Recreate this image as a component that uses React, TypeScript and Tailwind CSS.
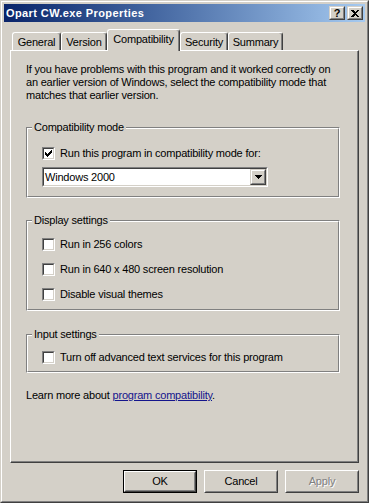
import type { ReactNode } from "react";

const font = "font-['Liberation_Sans',Arial,sans-serif]";

const CheckMark = () => (
  <svg width="7" height="7" viewBox="0 0 7 7" shapeRendering="crispEdges">
    <rect x="0" y="2" width="1" height="3" fill="#000" />
    <rect x="1" y="3" width="1" height="3" fill="#000" />
    <rect x="2" y="4" width="1" height="3" fill="#000" />
    <rect x="3" y="3" width="1" height="3" fill="#000" />
    <rect x="4" y="2" width="1" height="3" fill="#000" />
    <rect x="5" y="1" width="1" height="3" fill="#000" />
    <rect x="6" y="0" width="1" height="3" fill="#000" />
  </svg>
);

const CheckBox = ({ checked, label }: { checked?: boolean; label: string }) => (
  <div className="flex items-center h-[13px]">
    <span className="w-[13px] h-[13px] border border-t-[#808080] border-l-[#808080] border-r-white border-b-white">
      <span className="flex w-[11px] h-[11px] items-center justify-center bg-white border border-t-[#404040] border-l-[#404040] border-r-[#d4d0c8] border-b-[#d4d0c8]">
        {checked && <CheckMark />}
      </span>
    </span>
    <span className="ml-[5px] leading-[13px] whitespace-nowrap">{label}</span>
  </div>
);

const GroupBox = ({
  title,
  className,
  children,
}: {
  title: string;
  className: string;
  children: ReactNode;
}) => (
  <div className="relative w-[314px]">
    <div className="border border-t-[#808080] border-l-[#808080] border-r-white border-b-white">
      <div className={`border border-t-white border-l-white border-r-[#808080] border-b-[#808080] pl-[14px] ${className}`}>
        {children}
      </div>
    </div>
    <span className="absolute -top-[6px] left-[6px] px-[2px] bg-[#d4d0c8] leading-[13px]">
      {title}
    </span>
  </div>
);

const Button = ({
  label,
  isDefault,
  disabled,
}: {
  label: string;
  isDefault?: boolean;
  disabled?: boolean;
}) => (
  <button
    className={`w-[74px] h-[23px] bg-[#d4d0c8] ${isDefault ? "border border-black" : ""}`}
  >
    <span className="flex h-full w-full border border-t-white border-l-white border-r-[#404040] border-b-[#404040]">
      <span
        className={`flex flex-1 items-center justify-center border border-transparent border-r-[#808080] border-b-[#808080] leading-[13px] ${
          disabled ? "text-[#808080] [text-shadow:1px_1px_0_#fff]" : "text-black"
        }`}
      >
        {label}
      </span>
    </span>
  </button>
);

const CaptionButton = ({ children }: { children: ReactNode }) => (
  <span className="w-[16px] h-[14px] bg-[#d4d0c8] border border-t-[#d4d0c8] border-l-[#d4d0c8] border-r-[#404040] border-b-[#404040]">
    <span className="flex w-full h-full items-center justify-center border border-t-white border-l-white border-r-[#808080] border-b-[#808080]">
      {children}
    </span>
  </span>
);

const tabs = [
  { label: "General", width: "w-[49px]" },
  { label: "Version", width: "w-[46px]" },
  { label: "Compatibility", width: "w-[73px]", active: true },
  { label: "Security", width: "w-[48px]" },
  { label: "Summary", width: "w-[55px]" },
];

export default function App() {
  return (
    <div className={`${font} text-[11px] tracking-[-0.2px] text-black w-[369px] h-[503px] bg-[#d4d0c8] border border-t-[#d4d0c8] border-l-[#d4d0c8] border-r-[#404040] border-b-[#404040]`}>
      <div className="h-full border border-t-white border-l-white border-r-[#808080] border-b-[#808080] p-[2px] flex flex-col">
        {/* title bar */}
        <div className="h-[18px] flex items-center bg-gradient-to-r from-[#0a246a] to-[#a6caf0] pl-[2px] pr-[2px]">
          <span className="text-white font-bold tracking-[0.4px] leading-[13px] flex-1">Opart CW.exe Properties</span>
          <div className="flex gap-[2px]">
            <CaptionButton>
              <span className="font-bold text-[11px] leading-[10px] tracking-normal">?</span>
            </CaptionButton>
            <CaptionButton>
              <svg width="8" height="7" viewBox="0 0 8 7" shapeRendering="crispEdges">
                <path d="M0 0h2l2 2 2-2h2L5 3.5 8 7H6L4 5 2 7H0l3-3.5z" fill="#000" />
              </svg>
            </CaptionButton>
          </div>
        </div>

        {/* tabs */}
        <div className="h-[28px] flex items-end ml-[8px]">
          {tabs.map((t) =>
            t.active ? (
              <div
                key={t.label}
                className={`${t.width} h-[22px] -mb-[1px] relative z-10 bg-[#d4d0c8] rounded-t-[3px] border border-b-0 border-t-white border-l-white border-r-[#404040] shadow-[inset_-1px_0_0_#808080] flex justify-center pt-[3px] leading-[13px]`}
              >
                {t.label}
              </div>
            ) : (
              <div
                key={t.label}
                className={`${t.width} h-[18px] rounded-t-[3px] border border-b-0 border-t-white border-l-white border-r-[#404040] shadow-[inset_-1px_0_0_#808080] flex justify-center pt-[3px] leading-[13px]`}
              >
                {t.label}
              </div>
            )
          )}
        </div>

        {/* tab panel */}
        <div className="ml-[6px] w-[349px] h-[413px] border border-t-white border-l-white border-r-[#404040] border-b-[#404040] shadow-[inset_-1px_-1px_0_#808080] pl-[15px] pt-[12px]">
          <p className="leading-[13px] whitespace-nowrap">
            If you have problems with this program and it worked correctly on
            <br />
            an earlier version of Windows, select the compatibility mode that
            <br />
            matches that earlier version.
          </p>

          <div className="mt-[25px]">
            <GroupBox title="Compatibility mode" className="pt-[18px] pb-[9px]">
              <CheckBox checked label="Run this program in compatibility mode for:" />
              <div className="mt-[7px] w-[226px] h-[20px] border border-t-[#808080] border-l-[#808080] border-r-white border-b-white">
                <div className="flex h-full bg-white border border-t-[#404040] border-l-[#404040] border-r-[#d4d0c8] border-b-[#d4d0c8]">
                  <span className="flex-1 pl-[1px] leading-[16px]">Windows 2000</span>
                  <span className="w-[16px] h-full bg-[#d4d0c8] border border-t-[#d4d0c8] border-l-[#d4d0c8] border-r-[#404040] border-b-[#404040]">
                    <span className="flex w-full h-full items-center justify-center border border-t-white border-l-white border-r-[#808080] border-b-[#808080]">
                      <svg width="7" height="4" viewBox="0 0 7 4" shapeRendering="crispEdges">
                        <path d="M0 0h7L3.5 4z" fill="#000" />
                      </svg>
                    </span>
                  </span>
                </div>
              </div>
            </GroupBox>
          </div>

          <div className="mt-[22px]">
            <GroupBox title="Display settings" className="pt-[16px] pb-[8px] flex flex-col gap-[12px]">
              <CheckBox label="Run in 256 colors" />
              <CheckBox label="Run in 640 x 480 screen resolution" />
              <CheckBox label="Disable visual themes" />
            </GroupBox>
          </div>

          <div className="mt-[23px]">
            <GroupBox title="Input settings" className="pt-[15px] pb-[7px]">
              <CheckBox label="Turn off advanced text services for this program" />
            </GroupBox>
          </div>

          <p className="mt-[16px] leading-[13px]">
            Learn more about{" "}
            <a className="text-[#14148c] underline">program compatibility</a>.
          </p>
        </div>

        {/* buttons */}
        <div className="mt-[7px] mr-[6px] flex justify-end gap-[7px]">
          <Button label="OK" isDefault />
          <Button label="Cancel" />
          <Button label="Apply" disabled />
        </div>
      </div>
    </div>
  );
}
